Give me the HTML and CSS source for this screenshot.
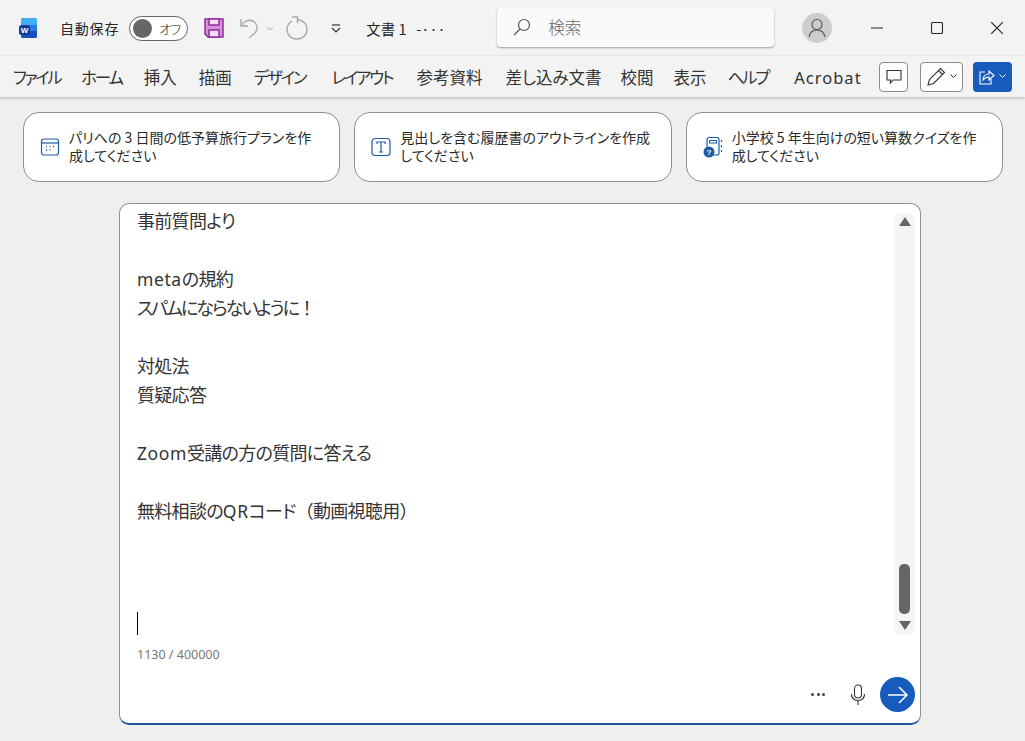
FILE: index.html
```html
<!DOCTYPE html>
<html lang="ja">
<head>
  <meta charset="UTF-8" />
  <title>文書 1 - Word</title>
  <link rel="stylesheet" href="styles.css">
</head>
<body>
  <header class="titlebar">
    <svg class="logo" width="20" height="20" viewBox="0 0 20 20">
      <rect x="3" y="0" width="16" height="20" rx="2" fill="#2a7de1"/>
      <path d="M5 0H17C18 0 19 1 19 2V7H3V2C3 1 4 0 5 0Z" fill="#3fb0f5"/>
      <path d="M3 13H19V18C19 19 18 20 17 20H5C4 20 3 19 3 18Z" fill="#1a50b8"/>
      <rect x="1" y="7" width="11" height="10" rx="2.500" fill="#0f3d96"/>
      <text x="6.500" y="15" class="logo-w">W</text>
    </svg>
    <span class="autosave">自動保存</span>
    <span class="toggle"><span class="knob"></span><span class="toggle-text">オフ</span></span>
    <svg class="save" width="20" height="20" viewBox="0 0 20 20">
      <path d="M1 1H19V19H4L1 16Z" fill="#d98fd9" stroke="#8e2c9a" stroke-width="1.500"/>
      <rect x="5" y="1" width="10" height="6" fill="#f4e2f4" stroke="#8e2c9a" stroke-width="1.500"/>
      <rect x="5" y="12" width="10" height="7" fill="#f4e2f4" stroke="#8e2c9a" stroke-width="1.500"/>
    </svg>
    <svg class="undo" width="20" height="22" viewBox="0 0 20 22" fill="none" stroke="#a8a8a8" stroke-width="1.400">
      <path d="M2 2V9H9"/>
      <path d="M2 9C5 4 10 2 14 4C19 7 19 13 16 16L10 21"/>
    </svg>
    <svg class="caret-small" width="8" height="5" viewBox="0 0 8 5" fill="none" stroke="#b5b5b5"><path d="M1 1L4 4L7 1"/></svg>
    <svg class="redo" width="22" height="24" viewBox="0 0 22 24" fill="none" stroke="#a8a8a8" stroke-width="1.400">
      <path d="M6 5C3 7 1 9 1 13C1 19 5 23 11 23C17 23 21 19 21 13C21 8 17 4 11 3.500"/>
      <path d="M6 1H11.500V7"/>
    </svg>
    <svg class="qat" width="10" height="9" viewBox="0 0 10 9" fill="none" stroke="#333" stroke-width="1.200">
      <path d="M1 1H9"/><path d="M1 4L5 8L9 4"/>
    </svg>
    <span class="doc-title">文書 1&nbsp;&nbsp;&nbsp;-···</span>
    <div class="search">
      <svg width="18" height="18" viewBox="0 0 18 18" fill="none" stroke="#555" stroke-width="1.200">
        <circle cx="11" cy="7" r="5.500"/><path d="M7 11L1 17"/>
      </svg>
      <span>検索</span>
    </div>
    <span class="avatar">
      <svg width="20" height="20" viewBox="0 0 20 20" fill="none" stroke="#555" stroke-width="1.100">
        <circle cx="10" cy="6.500" r="5"/><path d="M2 19C3 14 6 12 10 12C14 12 17 14 18 19"/>
      </svg>
    </span>
    <div class="window-btns">
      <svg width="12" height="12" viewBox="0 0 12 12" stroke="#222" fill="none"><path d="M0 6H12"/></svg>
      <svg width="12" height="12" viewBox="0 0 12 12" stroke="#222" stroke-width="1.100" fill="none"><rect x="0.500" y="0.500" width="11" height="11" rx="1.500"/></svg>
      <svg width="12" height="12" viewBox="0 0 12 12" stroke="#222" stroke-width="1.100" fill="none"><path d="M0 0L12 12M12 0L0 12"/></svg>
    </div>
  </header>

  <nav class="ribbon">
    <ul class="tabs">
      <li class="kana">ファイル</li>
      <li class="kana">ホーム</li>
      <li>挿入</li>
      <li>描画</li>
      <li class="kana">デザイン</li>
      <li class="kana">レイアウト</li>
      <li>参考資料</li>
      <li>差し込み文書</li>
      <li>校閲</li>
      <li>表示</li>
      <li class="kana">ヘルプ</li>
      <li class="latin">Acrobat</li>
    </ul>
    <button class="rb-btn comment">
      <svg width="16" height="16" viewBox="0 0 16 16" fill="none" stroke="#333" stroke-width="1.100"><path d="M1 1.500H15V11H7L4.500 14V11H1Z"/></svg>
    </button>
    <button class="rb-btn edit">
      <svg width="20" height="20" viewBox="0 0 20 20" fill="none" stroke="#333" stroke-width="1.100"><path d="M2 18L3.500 12.500L14.500 1.500L18.500 5.500L7.500 16.500Z"/><path d="M12.500 3.500L16.500 7.500"/></svg>
      <svg width="7" height="5" viewBox="0 0 7 5" fill="none" stroke="#333"><path d="M0.500 0.500L3.500 3.500L6.500 0.500"/></svg>
    </button>
    <button class="rb-btn share">
      <svg width="16" height="16" viewBox="0 0 16 16" fill="none" stroke="#fff" stroke-width="1.100"><path d="M6 3H1V15H12V10"/><path d="M4 11C4 7 7 5 10 5V2L15 6.500L10 11V8C8 8 5.500 9 4 11Z"/></svg>
      <svg width="7" height="5" viewBox="0 0 7 5" fill="none" stroke="#fff"><path d="M0.500 0.500L3.500 3.500L6.500 0.500"/></svg>
    </button>
  </nav>

  <main class="content">
    <section class="cards">
      <div class="card">
        <svg width="20" height="20" viewBox="0 0 20 20" fill="none" stroke="#1d5ba8" stroke-width="1.200">
          <rect x="1.500" y="2" width="17" height="16" rx="2.500"/><path d="M1.500 6H18.500"/>
          <path d="M6 9.500H7M9.500 9.500H10.500M13 9.500H14M6 13H7M9.500 13H10.500" stroke-width="1.600"/>
        </svg>
        <p>パリへの 3 日間の低予算旅行プランを作成してください</p>
      </div>
      <div class="card">
        <svg width="20" height="20" viewBox="0 0 20 20" fill="none" stroke="#1d5ba8" stroke-width="1.200">
          <rect x="1" y="1.500" width="18" height="17" rx="3"/><path d="M6 7V5H14V7M10 5V15M8 15H12"/>
        </svg>
        <p>見出しを含む履歴書のアウトラインを作成してください</p>
      </div>
      <div class="card">
        <svg width="20" height="22" viewBox="0 0 20 22" fill="none" stroke="#1d5ba8" stroke-width="1.200">
          <path d="M4 11V4C4 2.500 5 1.500 6.500 1.500H14C15.500 1.500 16 2.500 16 4V17C16 18.500 15 19 14 19H10"/>
          <rect x="6.500" y="4.500" width="7" height="2.500" stroke-width="1"/>
          <path d="M18.500 4V6M18.500 9V11M18.500 14V16" stroke-width="1.200"/>
          <circle cx="6" cy="16" r="5.500" fill="#1d5ba8" stroke="none"/>
          <text x="6" y="19" class="quiz-mark">?</text>
        </svg>
        <p>小学校 5 年生向けの短い算数クイズを作成してください</p>
      </div>
    </section>

    <section class="editor">
      <div class="editor-main">
        <div class="text">
          <p>事前質問より</p>
          <p>&nbsp;</p>
          <p><span class="latin-run">meta</span>の規約</p>
          <p class="tight">スパムにならないように<span class="fw">！</span></p>
          <p>&nbsp;</p>
          <p>対処法</p>
          <p>質疑応答</p>
          <p>&nbsp;</p>
          <p><span class="latin-run">Zoom</span>受講の方の質問に答える</p>
          <p>&nbsp;</p>
          <p>無料相談の<span class="latin-run">QR</span>コード<span class="fw">（</span>動画視聴用<span class="fw">）</span></p>
          <p>&nbsp;</p>
          <p>&nbsp;</p>
          <p>&nbsp;</p>
          <p><span class="cursor"></span></p>
        </div>
        <div class="scrollbar">
          <span class="arrow-up"></span>
          <span class="thumb"></span>
          <span class="arrow-down"></span>
        </div>
      </div>
      <div class="count">1130 / 400000</div>
      <div class="editor-foot">
        <span class="dots"><i></i><i></i><i></i></span>
        <svg width="16" height="22" viewBox="0 0 16 22" fill="none" stroke="#333" stroke-width="1.100">
          <rect x="4.500" y="1" width="7" height="13" rx="3.500"/><path d="M1.500 10C1.500 14 4 16.500 8 16.500C12 16.500 14.500 14 14.500 10M8 16.500V21"/>
        </svg>
        <button class="send">
          <svg width="22" height="20" viewBox="0 0 22 20" fill="none" stroke="#fff" stroke-width="1.600"><path d="M1 10H20M12 2L20 10L12 18"/></svg>
        </button>
      </div>
    </section>
  </main>
</body>
</html>
```

FILE: styles.css
```css
* {
  box-sizing: border-box;
}
html, body {
  height: 100%;
}
body {
  margin: 0;
  background: #efefef;
  color: #222;
  font-family: "Noto Sans CJK JP", "Noto Sans", sans-serif;
  font-feature-settings: "palt";
  font-weight: 400;
  overflow: hidden;
}
p {
  margin: 0;
}

/* title bar */
.titlebar {
  display: flex;
  align-items: center;
  height: 56px;
  background: #f3f3f3;
  font-size: 14px;
  color: #262626;
}
.logo {
  margin-left: 18px;
}
.logo-w {
  font: bold 8px "Liberation Sans", sans-serif;
  fill: #fff;
  text-anchor: middle;
}
.autosave {
  margin-left: 22px;
  letter-spacing: 0.8px;
}
.toggle {
  display: flex;
  align-items: center;
  width: 59px;
  height: 25px;
  margin-left: 10px;
  padding: 0 3px;
  border: 1px solid #666;
  border-radius: 13px;
  background: #fff;
}
.knob {
  width: 19px;
  height: 19px;
  border-radius: 50%;
  background: #666;
}
.toggle-text {
  margin-left: 7px;
  font-size: 13px;
  font-weight: 300;
  letter-spacing: -1px;
}
.save {
  margin-left: 16px;
}
.undo {
  margin-left: 15px;
}
.caret-small {
  margin-left: 7px;
}
.redo {
  margin-left: 12px;
}
.qat {
  margin-left: 23px;
}
.doc-title {
  width: 131px;
  margin-left: 25px;
  font-size: 14.5px;
  white-space: nowrap;
}
.search {
  display: flex;
  align-items: center;
  gap: 17px;
  width: 277px;
  height: 39px;
  margin-top: -2px;
  padding-left: 16px;
  border-radius: 4px;
  background: #fafafa;
  box-shadow: 0 1px 2px rgba(0,0,0,0.35);
  color: #666;
  font-size: 16.5px;
  font-weight: 300;
}
.avatar {
  display: flex;
  align-items: center;
  justify-content: center;
  width: 30px;
  height: 30px;
  margin-left: 28px;
  border-radius: 50%;
  background: #cdcdcd;
}
.window-btns {
  display: flex;
  gap: 48px;
  margin-left: 39px;
}

/* ribbon tabs */
.ribbon {
  display: flex;
  align-items: center;
  height: 41px;
  padding: 0 13px 0 13px;
  background: #f3f3f3;
  box-shadow: 0 1px 3px rgba(0,0,0,0.25);
  position: relative;
}
.tabs {
  display: flex;
  gap: 21px;
  margin: 0;
  padding: 0;
  list-style: none;
  font-size: 16.5px;
  color: #333;
  white-space: nowrap;
}
.kana {
  letter-spacing: -2.200px;
}
.latin {
  padding-top: 1px;
  font-family: "Noto Sans", sans-serif;
  letter-spacing: 1px;
}
/* tab spacing in the ribbon is uneven, nudged by hand */
.tabs li:nth-child(1) { letter-spacing: -2.500px; }
.tabs li:nth-child(2) { margin-right: 1px; }
.tabs li:nth-child(3) { margin-right: 1px; }
.tabs li:nth-child(4) { margin-right: 1px; }
.tabs li:nth-child(5) { margin-right: 5px; }
.tabs li:nth-child(6) { margin-right: 3px; }
.tabs li:nth-child(7) { margin-right: 2px; }
.tabs li:nth-child(8) { margin-right: -2px; }
.tabs li:nth-child(9) { margin-right: -1px; }
.tabs li:nth-child(11) { margin-right: 5px; }
.rb-btn {
  display: flex;
  align-items: center;
  justify-content: center;
  gap: 4px;
  height: 30px;
  padding: 0;
  border: 1px solid #8a8a8a;
  border-radius: 4px;
  background: #fdfdfd;
}
.comment {
  width: 29px;
  margin-left: auto;
}
.edit {
  width: 43px;
  margin-left: 12px;
}
.share {
  width: 39px;
  margin-left: 10px;
  border: none;
  background: #175cbd;
}

/* content */
.content {
  padding: 15px 22px 0 23px;
}
.cards {
  display: flex;
  gap: 14px;
}
.card {
  display: flex;
  flex: 1;
  align-items: center;
  gap: 9px;
  height: 70px;
  padding: 0 18px 0 16px;
  border: 1px solid #8f8f8f;
  border-radius: 16px;
  background: #fff;
  font-size: 14px;
  line-height: 18px;
  color: #2a2a2a;
}
.card svg {
  flex: none;
}
.card p {
  margin-top: -2px;
}
.quiz-mark {
  font: bold 8px "Liberation Sans", sans-serif;
  fill: #fff;
  stroke: none;
  text-anchor: middle;
}

/* editor */
.editor {
  display: flex;
  flex-direction: column;
  width: 802px;
  height: 522px;
  margin: 21px 0 0 96px;
  border: 1px solid #8f8f8f;
  border-bottom: 2px solid #1b5496;
  border-radius: 10px;
  background: #fff;
}
.editor-main {
  display: flex;
  height: 432px;
  overflow: hidden;
}
.text {
  flex: 1;
  padding: 2px 0 0 17px;
  font-size: 18px;
  line-height: 29px;
  letter-spacing: -0.700px;
  color: #333;
}
.text p {
  height: 29px;
}
.text .tight {
  letter-spacing: -2px;
}
.latin-run {
  font-family: "Noto Sans", sans-serif;
  font-size: 17.5px;
  letter-spacing: 0.600px;
}
.fw {
  font-feature-settings: normal;
}
.cursor {
  display: inline-block;
  width: 1px;
  height: 23px;
  background: #000;
  vertical-align: 1px;
}
.scrollbar {
  display: flex;
  flex-direction: column;
  align-items: center;
  width: 21px;
  height: 422px;
  margin: 9px 5px 0 0;
  padding: 4px 0 5px;
  border-radius: 8px;
  background: #f5f5f5;
}
.arrow-up, .arrow-down {
  width: 0;
  height: 0;
  border-left: 6px solid transparent;
  border-right: 6px solid transparent;
}
.arrow-up {
  border-bottom: 9px solid #666;
}
.arrow-down {
  border-top: 9px solid #666;
}
.thumb {
  width: 11px;
  height: 50px;
  margin-top: auto;
  margin-bottom: 7px;
  border-radius: 5px;
  background: #666;
}
.count {
  padding: 10px 0 0 17px;
  font-size: 12.5px;
  line-height: 18px;
  color: #777;
  font-family: "Noto Sans", sans-serif;
}
.editor-foot {
  display: flex;
  align-items: center;
  justify-content: flex-end;
  margin-top: auto;
  padding: 0 5px 11px 0;
}
.dots {
  display: flex;
  gap: 2.500px;
  margin-right: 25px;
}
.dots i {
  width: 3px;
  height: 3px;
  border-radius: 50%;
  background: #444;
}
.send {
  display: flex;
  align-items: center;
  justify-content: center;
  width: 35px;
  height: 35px;
  margin-left: 14px;
  padding: 0;
  border: none;
  border-radius: 50%;
  background: #175cbd;
}
```
